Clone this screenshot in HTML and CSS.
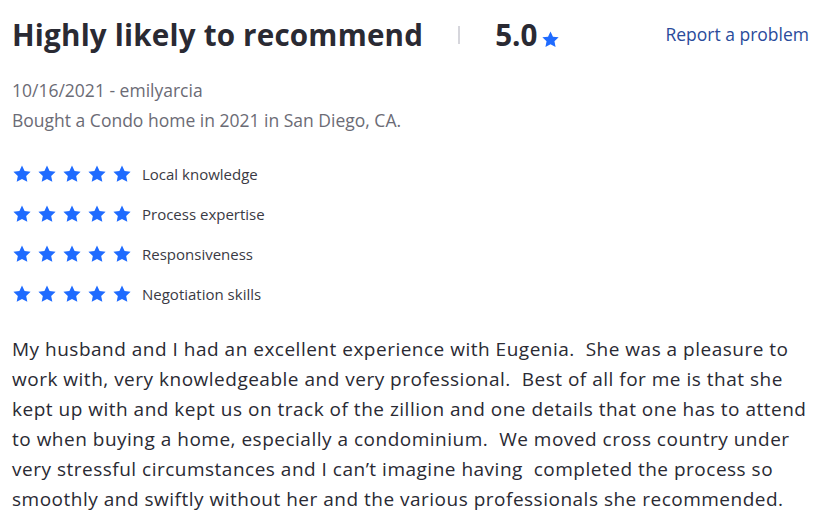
FILE: index.html
```html
<!DOCTYPE html>
<html>
<head>
<meta charset="utf-8">
<link rel="stylesheet" href="styles.css">
</head>
<body>
<svg width="0" height="0" class="defs">
  <defs>
    <symbol id="star" viewBox="0 0 24 24">
      <path d="M12 1.8l3.1 6.6 7.2.9-5.3 5 1.4 7.1L12 17.9l-6.4 3.5 1.4-7.1-5.3-5 7.2-.9z" stroke-linejoin="round"/>
    </symbol>
  </defs>
</svg>
<div class="review">
  <div class="header">
    <h1 class="title">Highly likely to recommend</h1>
    <span class="sep"></span>
    <span class="score">5.0</span>
    <svg class="score-star"><use href="#star"/></svg>
    <a class="report" href="#">Report a problem</a>
  </div>
  <div class="meta">
    <div>10/16/2021 - emilyarcia</div>
    <div>Bought a Condo home in 2021 in San Diego, CA.</div>
  </div>
  <div class="ratings">
    <div class="rating">
      <span class="stars"><svg><use href="#star"/></svg><svg><use href="#star"/></svg><svg><use href="#star"/></svg><svg><use href="#star"/></svg><svg><use href="#star"/></svg></span>
      <span class="label">Local knowledge</span>
    </div>
    <div class="rating">
      <span class="stars"><svg><use href="#star"/></svg><svg><use href="#star"/></svg><svg><use href="#star"/></svg><svg><use href="#star"/></svg><svg><use href="#star"/></svg></span>
      <span class="label">Process expertise</span>
    </div>
    <div class="rating">
      <span class="stars"><svg><use href="#star"/></svg><svg><use href="#star"/></svg><svg><use href="#star"/></svg><svg><use href="#star"/></svg><svg><use href="#star"/></svg></span>
      <span class="label">Responsiveness</span>
    </div>
    <div class="rating">
      <span class="stars"><svg><use href="#star"/></svg><svg><use href="#star"/></svg><svg><use href="#star"/></svg><svg><use href="#star"/></svg><svg><use href="#star"/></svg></span>
      <span class="label">Negotiation skills</span>
    </div>
  </div>
  <p class="body">My husband and I had an excellent experience with Eugenia.&nbsp; She was a pleasure to work with, very knowledgeable and very professional.&nbsp; Best of all for me is that she kept up with and kept us on track of the zillion and one details that one has to attend to when buying a home, especially a condominium.&nbsp; We moved cross country under very stressful circumstances and I can’t imagine having&nbsp; completed the process so smoothly and swiftly without her and the various professionals she recommended.</p>
</div>
</body>
</html>
```
FILE: styles.css
```css
html, body {
  margin: 0;
  padding: 0;
  background: #ffffff;
}
body {
  font-family: "Open Sans", sans-serif;
  color: #2a2a33;
}
.defs {
  position: absolute;
  width: 0;
  height: 0;
}
.review {
  padding: 0 12px 0 12px;
}
.header {
  display: flex;
  align-items: center;
  height: 68px;
}
.title {
  margin: 0;
  font-size: 29.6px;
  font-weight: 700;
  letter-spacing: 0.2px;
  color: #2a2a33;
}
.sep {
  width: 2px;
  height: 18px;
  background: #d6d6dc;
  margin: 2px 0 0 35px;
}
.score {
  font-size: 29.6px;
  font-weight: 700;
  margin-left: 35px;
}
.score-star {
  width: 19px;
  height: 19px;
  fill: #1f6bff;
  margin: 10px 0 0 4px;
}
.report {
  margin-left: auto;
  font-size: 17.5px;
  color: #2a4b9b;
  text-decoration: none;
  margin-right: 6px;
}
.meta {
  font-size: 17.5px;
  line-height: 30px;
  color: #6b6b75;
  margin-top: 7px;
}
.ratings {
  margin-top: 29px;
  display: flex;
  flex-direction: column;
  gap: 20px;
}
.rating {
  display: flex;
  align-items: center;
  height: 20px;
}
.stars {
  display: flex;
  gap: 5px;
}
.stars svg {
  width: 20px;
  height: 20px;
  fill: #1f6bff;
}
.label {
  font-size: 15px;
  margin-left: 10px;
  color: #3a3a44;
}
.body {
  margin: 30px 0 0 0;
  font-size: 19px;
  letter-spacing: 0.5px;
  line-height: 30px;
  width: 800px;
}
```
